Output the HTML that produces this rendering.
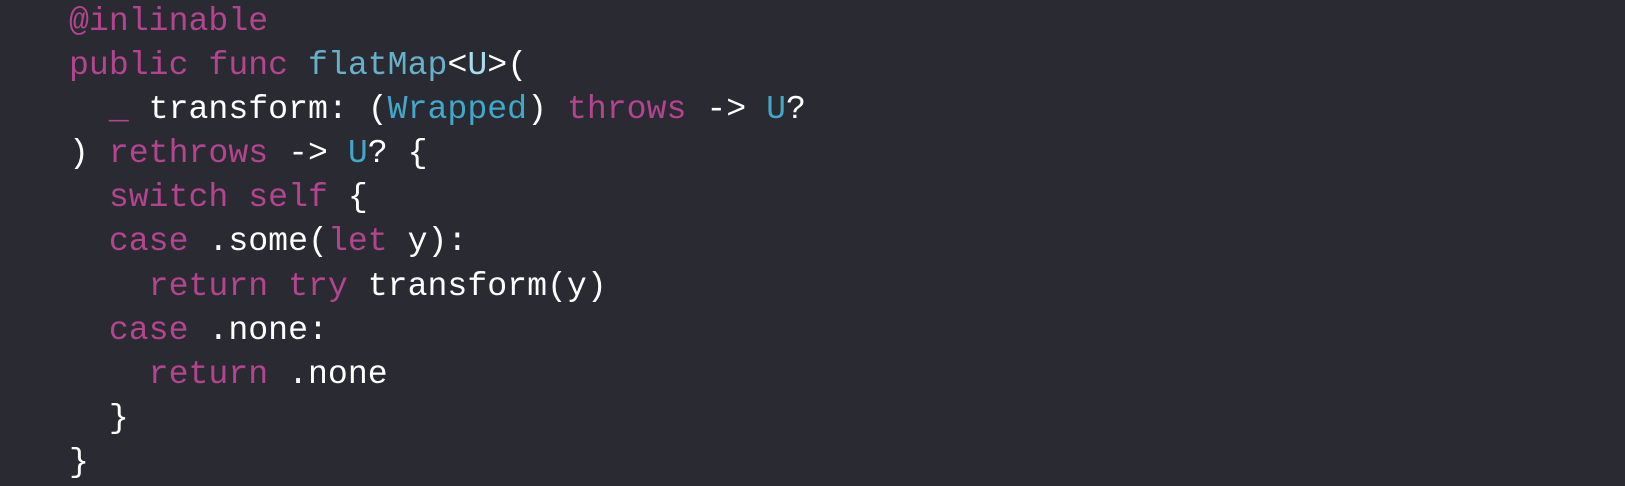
<!DOCTYPE html>
<html><head><style>
html,body{margin:0;padding:0;background:#292a32;width:1625px;height:486px;overflow:hidden}
pre{margin:0;position:absolute;left:69px;top:-1px;font-family:"Liberation Mono",monospace;font-size:33.2px;line-height:44.1px;color:#ffffff;letter-spacing:0}
.k{color:#b3448f}.f{color:#67b0ca}.t{color:#42a8c9}.u{color:#a8dcef}
</style></head><body>
<pre><span class="k">@inlinable</span>
<span class="k">public</span> <span class="k">func</span> <span class="f">flatMap</span>&lt;<span class="u">U</span>&gt;(
  <span class="k">_</span> transform: (<span class="t">Wrapped</span>) <span class="k">throws</span> -&gt; <span class="t">U</span>?
) <span class="k">rethrows</span> -&gt; <span class="t">U</span>? {
  <span class="k">switch</span> <span class="k">self</span> {
  <span class="k">case</span> .some(<span class="k">let</span> y):
    <span class="k">return</span> <span class="k">try</span> transform(y)
  <span class="k">case</span> .none:
    <span class="k">return</span> .none
  }
}</pre>
</body></html>
